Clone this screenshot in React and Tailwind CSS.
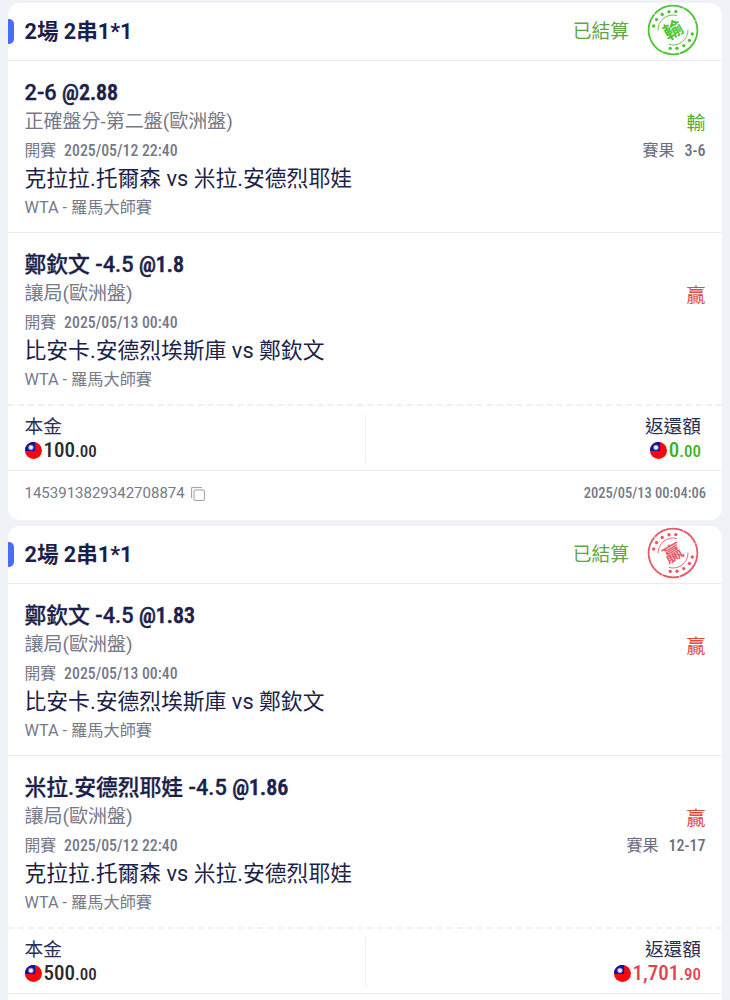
import { clsx } from 'clsx'

const slips = [
    {
        id: '1453913829342708874',
        title: '2場 2串1*1',
        won: false,
        legs: [
            {
                pick: '2-6', odds: '@2.88', market: '正確盤分-第二盤(歐洲盤)', start: '2025/05/12 22:40',
                match: '克拉拉.托爾森 vs 米拉.安德烈耶娃', league: 'WTA - 羅馬大師賽', won: false, score: '3-6',
            },
            {
                pick: '鄭欽文 -4.5', odds: '@1.8', market: '讓局(歐洲盤)', start: '2025/05/13 00:40',
                match: '比安卡.安德烈埃斯庫 vs 鄭欽文', league: 'WTA - 羅馬大師賽', won: true,
            },
        ],
        stake: ['100', '.00'],
        payout: ['0', '.00'],
        settledAt: '2025/05/13 00:04:06',
    },
    {
        id: '1453913829342708875',
        title: '2場 2串1*1',
        won: true,
        legs: [
            {
                pick: '鄭欽文 -4.5', odds: '@1.83', market: '讓局(歐洲盤)', start: '2025/05/13 00:40',
                match: '比安卡.安德烈埃斯庫 vs 鄭欽文', league: 'WTA - 羅馬大師賽', won: true,
            },
            {
                pick: '米拉.安德烈耶娃 -4.5', odds: '@1.86', market: '讓局(歐洲盤)', start: '2025/05/12 22:40',
                match: '克拉拉.托爾森 vs 米拉.安德烈耶娃', league: 'WTA - 羅馬大師賽', won: true, score: '12-17',
            },
        ],
        stake: ['500', '.00'],
        payout: ['1,701', '.90'],
    },
]

const dots = [[-19.3, -4], [-16.4, -10.4], [-10.8, -15.6], [-4, -18.2], [2.8, -18.4]]

function Stamp({ won }) {
    const color = won ? '#e65a68' : '#4cc534'
    return (
        <svg viewBox="-26 -26 52 52" className="h-[52px] w-[52px]" fill="none" stroke={color}>
            <circle r="24.4" strokeWidth="1.8" strokeDasharray="31 .6 17 .5 44 .7" />
            {[0, 180].map((turn) => (
                <g key={turn} transform={`rotate(${turn})`}>
                    <path d="M-15 0.4A15 15 0 0 1 4.2 -14.4" strokeWidth="0.9" />
                    {dots.map(([x, y]) => (
                        <circle key={x} cx={x} cy={y} r="1.7" fill={color} stroke="none" />
                    ))}
                </g>
            ))}
            <text
                transform="rotate(-30)"
                y="7"
                textAnchor="middle"
                fill={color}
                stroke="none"
                className="text-[19px] font-bold"
            >
                {won ? '贏' : '輸'}
            </text>
        </svg>
    )
}

function Flag() {
    return (
        <svg viewBox="0 0 16 16" className="h-[17px] w-[17px] shrink-0">
            <circle cx="8" cy="8" r="8" fill="#f5090f" />
            <path d="M0 8.5A8 8 0 0 1 9.5 .1V8.5Z" fill="#12129c" />
            <circle cx="5.6" cy="5.2" r="2.6" fill="#8f93de" />
            <circle cx="5.6" cy="5.2" r="1.6" fill="#fff" />
        </svg>
    )
}

function CopyIcon() {
    return (
        <svg viewBox="0 0 14 14" className="ml-[6.5px] h-[14px] w-[14px]" fill="none" stroke="#9a9da5">
            <path d="M.6 11V.6H11" />
            <rect x="3" y="3" width="10.4" height="10.4" rx=".8" />
        </svg>
    )
}

function Num({ children, className }) {
    return <span className={clsx('[font-stretch:85%]', className)}>{children}</span>
}

function Amount({ value, className }) {
    return (
        <div className={clsx('flex h-6 items-center', className)}>
            <Flag />
            <span className="ml-0.5 font-medium leading-6">
                <Num className="text-[21px]">{value[0]}</Num>
                <Num className="text-[17px]">{value[1]}</Num>
            </span>
        </div>
    )
}

function Leg({ leg }) {
    return (
        <div className="flex h-[171px] justify-between pl-[16.5px] pr-[16.5px] pt-[18px] leading-[28.8px]">
            <div className="whitespace-nowrap text-[#757988]">
                <div className="text-[21.8px] font-medium text-[#1c1f49] [-webkit-text-stroke:0.3px]">
                    {leg.pick} <Num className="text-[22px] [-webkit-text-stroke:0.6px]">{leg.odds}</Num>
                </div>
                <div className="text-[19px]">{leg.market}</div>
                <div className="text-[15.8px]">
                    開賽<Num className="ml-2 font-medium">{leg.start}</Num>
                </div>
                <div className="text-[21.8px] text-[#1c1f49]">{leg.match}</div>
                <div className="text-[16.2px]">{leg.league}</div>
            </div>
            <div className="flex flex-col items-end pt-[31px]">
                <div className={clsx('text-[19px] leading-[27px]', leg.won ? 'text-[#df4a3f]' : 'text-[#4fae32]')}>
                    {leg.won ? '贏' : '輸'}
                </div>
                {leg.score && (
                    <div className="text-[16px] leading-[28px] text-[#6b6f80]">
                        賽果<Num className="ml-2.5 font-medium">{leg.score}</Num>
                    </div>
                )}
            </div>
        </div>
    )
}

function Slip({ slip }) {
    return (
        <section className="rounded-xl bg-white">
            <header className="flex h-[57px] items-center">
                <div className="h-[25px] w-[6px] rounded-r-[5px] bg-[#4a6cf7]" />
                <h2 className="ml-[10.5px] flex-1 pt-px text-[21.6px] font-bold text-[#1c1f49]">{slip.title}</h2>
                <span className="mr-[18px] pt-px text-[18.8px] text-[#5fa644]">已結算</span>
                <div className="mr-[23px] mt-[-3px]">
                    <Stamp won={slip.won} />
                </div>
            </header>
            <div className="border-t border-[#e9ecf1]">
                <Leg leg={slip.legs[0]} />
            </div>
            <div className="border-t border-[#e9ecf1]">
                <Leg leg={slip.legs[1]} />
            </div>
            <div className="flex h-[65.5px] items-center border-t-2 border-dashed border-[#f0f1f4] pt-[2px]">
                <div className="w-[357px] pl-[16.5px]">
                    <div className="text-[18.7px] leading-6 text-[#292d50]">本金</div>
                    <Amount value={slip.stake} className="text-[#2a2a2d]" />
                </div>
                <div className="h-12 w-px bg-[#eceef2]" />
                <div className="flex flex-1 flex-col items-end pr-[21px]">
                    <div className="text-[18.7px] leading-6 text-[#292d50]">返還額</div>
                    <Amount value={slip.payout} className={slip.won ? 'text-[#e5404f]' : 'text-[#3fb21f]'} />
                </div>
            </div>
            <footer className="flex h-[50.5px] items-center border-t border-[#e9ecf1] pb-[3.5px] pl-[16.5px] pr-4 text-[15px] text-[#757988]">
                {slip.settledAt && (
                    <>
                        <span>{slip.id}</span>
                        <CopyIcon />
                        <Num className="ml-auto text-[14.5px] font-medium">{slip.settledAt}</Num>
                    </>
                )}
            </footer>
        </section>
    )
}

export default function App() {
    return (
        <main className="flex h-[1000px] flex-col gap-[6px] overflow-hidden bg-[#eff2f6] px-2 pt-[3px] font-[Roboto,'Noto_Sans_CJK_TC',sans-serif]">
            {slips.map((slip) => (
                <div key={slip.id} className="shrink-0">
                    <Slip slip={slip} />
                </div>
            ))}
        </main>
    )
}
